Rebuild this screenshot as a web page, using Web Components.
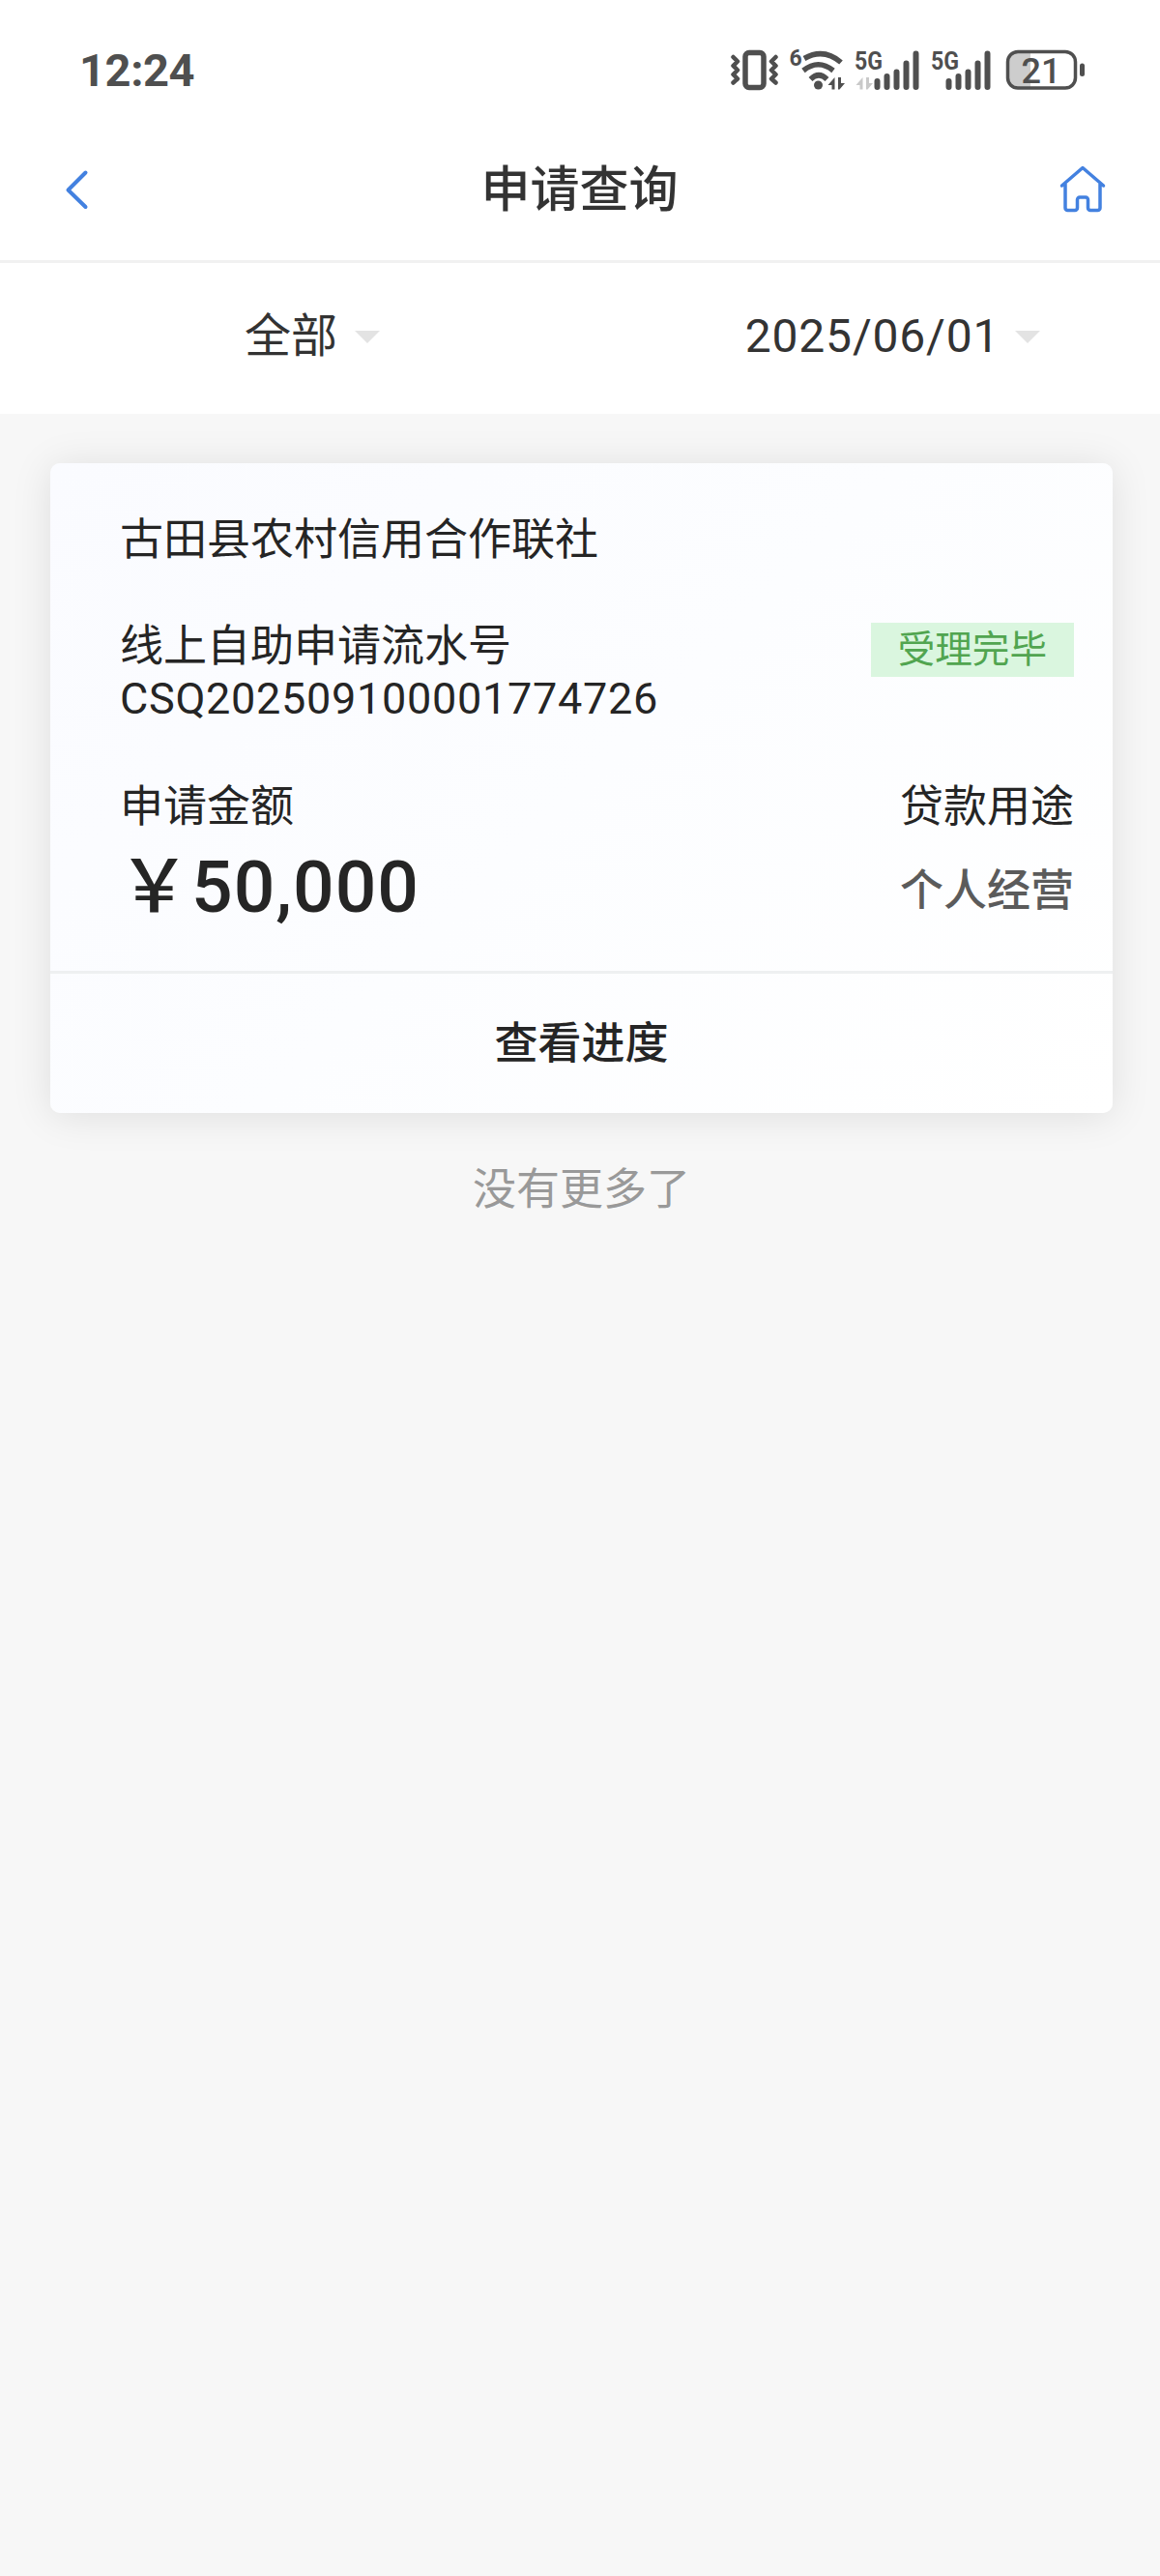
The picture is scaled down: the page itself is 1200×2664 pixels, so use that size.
<!DOCTYPE html>
<html lang="zh-CN">
<head>
<meta charset="utf-8">
<title>申请查询</title>
<style>
* {
	box-sizing: border-box;
}

body {
	margin: 0;
	background: #f7f7f7;
	font-family: Roboto, 'Noto Sans CJK SC', sans-serif;
	color: #333;
}

main {
	padding: 51px 49px 0 52px;
}
</style>
</head>
<body>
<status-bar time="12:24"></status-bar>
<nav-header>申请查询</nav-header>
<filter-bar>
	<filter-item>全部</filter-item>
	<filter-item class="date">2025/06/01</filter-item>
</filter-bar>
<main>
	<loan-card>
		<span slot="bank">古田县农村信用合作联社</span>
		<span slot="serial-label">线上自助申请流水号</span>
		<span slot="serial">CSQ202509100001774726</span>
		<status-tag slot="status">受理完毕</status-tag>
		<span slot="amount-label">申请金额</span>
		<span slot="amount">￥50,000</span>
		<span slot="usage-label">贷款用途</span>
		<span slot="usage">个人经营</span>
		<span slot="action">查看进度</span>
	</loan-card>
	<list-end>没有更多了</list-end>
</main>

<script>
function define(name, html) {
	const template = document.createElement('template')
	template.innerHTML = html
	window.customElements.define(name, class extends HTMLElement {
		constructor() {
			super()
			this.attachShadow({ mode: 'open' })
			this.shadowRoot.appendChild(template.content.cloneNode(true))
		}

		connectedCallback() {
			const time = this.shadowRoot.querySelector('.time')
			if (time) time.textContent = this.getAttribute('time')
		}
	})
}

define('status-bar', `
<style>
:host {
	display: flex;
	justify-content: space-between;
	height: 122px;
	padding: 46px 76px 0 82px;
	background: #fff;
	color: #4f4f4f;
}

.time {
	font-size: 47px;
	line-height: 54px;
	font-weight: 700;
	letter-spacing: -0.4px;
}

svg {
	display: block;
	width: 370px;
	height: 52px;
}

text {
	font-family: Roboto, sans-serif;
	font-weight: 700;
	fill: #4f4f4f;
}
</style>
<div class="time"></div>
<svg viewBox="754 46 370 52" fill="none" stroke="#4f4f4f" stroke-linecap="round" stroke-linejoin="round">
	<!-- vibrate -->
	<rect x="771" y="54.500" width="19" height="36" rx="4" stroke-width="5.500"/>
	<path d="M758.500 59l4.500 4.500-4.500 4.500 4.500 4.500-4.500 4.500 4.500 4.500-4.500 4M802.500 59l-4.500 4.500 4.500 4.500-4.500 4.500 4.500 4.500-4.500 4.500 4.500 4" stroke-width="4.500"/>
	<!-- wifi -->
	<text x="816.500" y="67.500" font-size="23" stroke="none">6</text>
	<path d="M832 60.500Q852 49 870 64.500M831 73Q846.500 60.500 862 73M838.500 82Q847 73.500 855.500 82" stroke-width="5.500" stroke-linecap="butt"/>
	<circle cx="846.500" cy="88" r="4.500" fill="#4f4f4f" stroke="none"/>
	<path d="M863.500 80v12.500h-3v-4.500h-4zM867 80h3v6h4l-5.500 6.500h-1.500z" fill="#4f4f4f" stroke="none"/>
	<!-- sim 1 -->
	<text x="884" y="72" font-size="26" textLength="29" lengthAdjust="spacingAndGlyphs" stroke="none">5G</text>
	<path d="M892.500 80v12.500h-3v-4.500h-4zM896 80h3v6h4l-5.500 6.500h-1.500z" fill="#c9c9c9" stroke="none"/>
	<path d="M907.500 84v6M917.500 79v11M927.500 74.500v15.500M937.500 65.500v24.500M947.500 55.500v34.500" stroke-width="6"/>
	<!-- sim 2 -->
	<text x="963" y="72" font-size="26" textLength="29" lengthAdjust="spacingAndGlyphs" stroke="none">5G</text>
	<path d="M981.500 84v6M991.500 79v11M1001.500 74.500v15.500M1011.500 65.500v24.500M1021.500 55.500v34.500" stroke-width="6"/>
	<!-- battery -->
	<path d="M1066 53.500h-13a10 10 0 0 0-10 10v17.500a10 10 0 0 0 10 10h13z" fill="#cdcdcd" stroke="none"/>
	<rect x="1042.500" y="53.500" width="70" height="37.500" rx="10.500" stroke-width="3.500"/>
	<path d="M1119.500 68v8.500" stroke-width="5"/>
	<text x="1056.500" y="85.500" font-size="36" stroke="none" style="font-weight:500">21</text>
</svg>
`)

define('nav-header', `
<style>
:host {
	display: flex;
	align-items: center;
	justify-content: space-between;
	height: 150px;
	padding: 0 53px 0 64px;
	background: #fff;
	border-bottom: 3px solid #f1f1f1;
}

h1 {
	margin: 0;
	padding-top: 2px;
	font-size: 51px;
	line-height: 60px;
	font-weight: 500;
}

svg {
	display: block;
	fill: none;
	stroke: #4381e0;
	stroke-linecap: round;
	stroke-linejoin: round;
}
</style>
<svg width="40" height="48" viewBox="64 172 40 48" stroke-width="4"><path d="M88.500 178.500L70.500 196.500 88.500 214"/></svg>
<h1><slot></slot></h1>
<svg width="52" height="52" viewBox="1096 170 52 52" stroke-width="3.500"><path d="M1099.500 192L1121 173.500 1142.500 192M1103 190v25a2.500 2.500 0 0 0 2.500 2.500h7.500a2.500 2.500 0 0 0 2.500-2.500v-8.500a2.500 2.500 0 0 1 2.500-2.500h6a2.500 2.500 0 0 1 2.500 2.500v8.500a2.500 2.500 0 0 0 2.500 2.500h7.500a2.500 2.500 0 0 0 2.500-2.500v-25"/></svg>
`)

define('filter-bar', `
<style>
:host {
	display: grid;
	grid-template-columns: 1fr 1fr;
	height: 156px;
	padding: 0 23px;
	background: #fff;
}
</style>
<slot></slot>
`)

define('filter-item', `
<style>
:host {
	display: flex;
	align-items: center;
	justify-content: center;
	gap: 18px;
	height: 152px;
	padding-left: 23px;
	font-size: 48px;
	line-height: 60px;
}

:host(.date) {
	gap: 16px;
	padding-left: 70px;
	letter-spacing: 0.8px;
}

i {
	border: 13px solid transparent;
	border-top-color: #e3e3e3;
	border-bottom: 0;
}
</style>
<slot></slot><i></i>
`)

define('status-tag', `
<style>
:host {
	display: block;
	padding: 0 28px;
	background: #daf6df;
	color: #51a550;
	font-size: 38.600px;
	line-height: 56px;
}
</style>
<slot></slot>
`)

define('loan-card', `
<style>
* {
	box-sizing: border-box;
}

:host {
	display: block;
	height: 672px;
	border-radius: 10px;
	background: linear-gradient(135deg, #fafbff, #fcfdff 50%, #fff);
	box-shadow: 0 3px 42px rgba(0, 0, 0, 0.1);
	color: #252525;
	font-size: 45px;
	line-height: 55px;
}

.body {
	display: flex;
	flex-direction: column;
	height: 525px;
	padding: 52px 40px 0 72px;
}

.row {
	display: flex;
	justify-content: space-between;
}

.row > div {
	display: flex;
	flex-direction: column;
}

.serial {
	margin-top: 55px;
}

.number {
	letter-spacing: 0.7px;
	margin-top: -1px;
}

.tag {
	padding-top: 3px;
}

.money {
	margin-top: 57px;
}

.amount {
	font-size: 75px;
	line-height: 90px;
	font-weight: 500;
	letter-spacing: 1px;
	margin: 10px 0 0 -2px;
}

.usage {
	margin-top: 32px;
	color: #5b5b5b;
	font-weight: 500;
}

.action {
	height: 147px;
	border-top: 3px solid #eef0f1;
	line-height: 145px;
	text-align: center;
	font-weight: 500;
}
</style>
<div class="body">
	<slot name="bank"></slot>
	<div class="row serial">
		<div>
			<slot name="serial-label"></slot>
			<div class="number"><slot name="serial"></slot></div>
		</div>
		<div class="tag"><slot name="status"></slot></div>
	</div>
	<div class="row money">
		<div>
			<slot name="amount-label"></slot>
			<div class="amount"><slot name="amount"></slot></div>
		</div>
		<div>
			<slot name="usage-label"></slot>
			<div class="usage"><slot name="usage"></slot></div>
		</div>
	</div>
</div>
<div class="action"><slot name="action"></slot></div>
`)

define('list-end', `
<style>
:host {
	display: block;
	padding-top: 52px;
	color: #999;
	font-size: 45px;
	line-height: 56px;
	text-align: center;
}
</style>
<slot></slot>
`)
</script>
</body>
</html>
